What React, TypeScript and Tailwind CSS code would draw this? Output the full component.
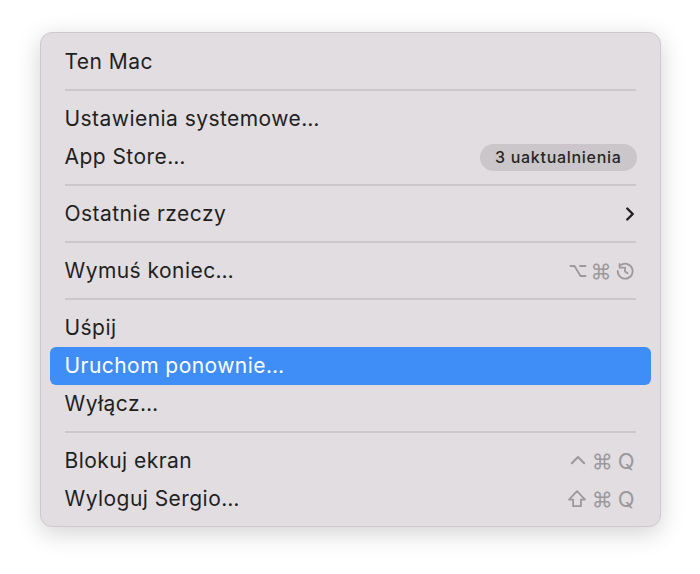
import React from 'react'
import { ChevronRight } from 'lucide-react'

type Item = {
    label: string
    shortcut?: React.ReactNode
    badge?: string
    submenu?: boolean
    active?: boolean
}

const RestartIcon = () => (
    <svg width="20" height="20" viewBox="0 0 20 20" fill="none" stroke="currentColor" strokeWidth="1.8" strokeLinecap="round" strokeLinejoin="round">
        <path d="M5.2 4.6A7.5 7.5 0 1 1 2.7 10" />
        <path d="M4.6 3v3.7h3.7" />
        <path d="M10 6.5v4l2.6 1.8" />
    </svg>
)

const OptionIcon = () => (
    <svg width="18" height="16" viewBox="0 0 18 16" fill="none" stroke="currentColor" strokeWidth="1.8" strokeLinecap="round" strokeLinejoin="round">
        <path d="M1.5 3h4l6 10h5" />
        <path d="M11 3h5.5" />
    </svg>
)

const CtrlIcon = () => (
    <svg width="18" height="18" viewBox="0 0 16 16" fill="none" stroke="currentColor" strokeWidth="1.8" strokeLinecap="round" strokeLinejoin="round">
        <path d="M2.5 10L8 4.5l5.5 5.5" />
    </svg>
)

const ShiftIcon = () => (
    <svg width="20" height="20" viewBox="0 0 18 18" fill="none" stroke="currentColor" strokeWidth="1.6" strokeLinejoin="round">
        <path d="M9 2L1.8 9.5h3.7v6h7v-6h3.7z" />
    </svg>
)

const Shortcut = ({ parts, gap }: { parts: React.ReactNode[]; gap: string }) => (
    <span className={`flex items-center text-[#9c999b] ${gap}`}>
        {parts.map((p, i) => (
            <span key={i} className="flex items-center">
                {p}
            </span>
        ))}
    </span>
)

const cmd = <span className="text-[21px] leading-none">⌘</span>
const q = <span className="text-[22px] leading-none">Q</span>

const groups: Item[][] = [
    [{ label: 'Ten Mac' }],
    [
        { label: 'Ustawienia systemowe…' },
        { label: 'App Store…', badge: '3 uaktualnienia' },
    ],
    [{ label: 'Ostatnie rzeczy', submenu: true }],
    [
        {
            label: 'Wymuś koniec…',
            shortcut: <Shortcut gap="gap-[3px]" parts={[<OptionIcon />, cmd, <RestartIcon />]} />,
        },
    ],
    [
        { label: 'Uśpij' },
        { label: 'Uruchom ponownie…', active: true },
        { label: 'Wyłącz…' },
    ],
    [
        { label: 'Blokuj ekran', shortcut: <Shortcut gap="gap-[5px]" parts={[<CtrlIcon />, cmd, q]} /> },
        { label: 'Wyloguj Sergio…', shortcut: <Shortcut gap="gap-[5px]" parts={[<ShiftIcon />, cmd, q]} /> },
    ],
]

const MenuRow = ({ item }: { item: Item }) => (
    <div
        className={`h-[38px] mx-[9px] px-4 rounded-[6px] flex items-center justify-between ${
            item.active ? 'bg-[#3f8ef8] text-white' : 'text-[#1f1f1f]'
        }`}
    >
        <span className="text-[21px] tracking-[0.45px] -ml-[1px]">{item.label}</span>
        {item.badge && (
            <span className="bg-[#cac6c9] text-[#262626] text-[16px] tracking-[0.7px] font-medium rounded-full px-[15px] h-[27px] flex items-center -mr-[2px]">
                {item.badge}
            </span>
        )}
        {item.submenu && <ChevronRight className="w-[22px] h-[22px] -mr-[6px]" strokeWidth={2.6} />}
        {item.shortcut}
    </div>
)

export default function App() {
    return (
        <div
            className="w-[700px] h-[574px] bg-white flex justify-center pt-[32px]"
            style={{ fontFamily: 'Inter, "Liberation Sans", sans-serif' }}
        >
            <div className="w-[621px] h-[495px] bg-[#e2dde1] rounded-[12px] border border-[#cdc9cc] shadow-[0_6px_24px_rgba(0,0,0,0.18)] pt-[10px] pb-[8px]">
                {groups.map((group, gi) => (
                    <div key={gi}>
                        {gi > 0 && (
                            <div className="pt-[8px] pb-[9px] px-[24px]">
                                <div className="h-[2px] bg-[#cbc7ca]" />
                            </div>
                        )}
                        {group.map((item) => (
                            <MenuRow key={item.label} item={item} />
                        ))}
                    </div>
                ))}
            </div>
        </div>
    )
}
